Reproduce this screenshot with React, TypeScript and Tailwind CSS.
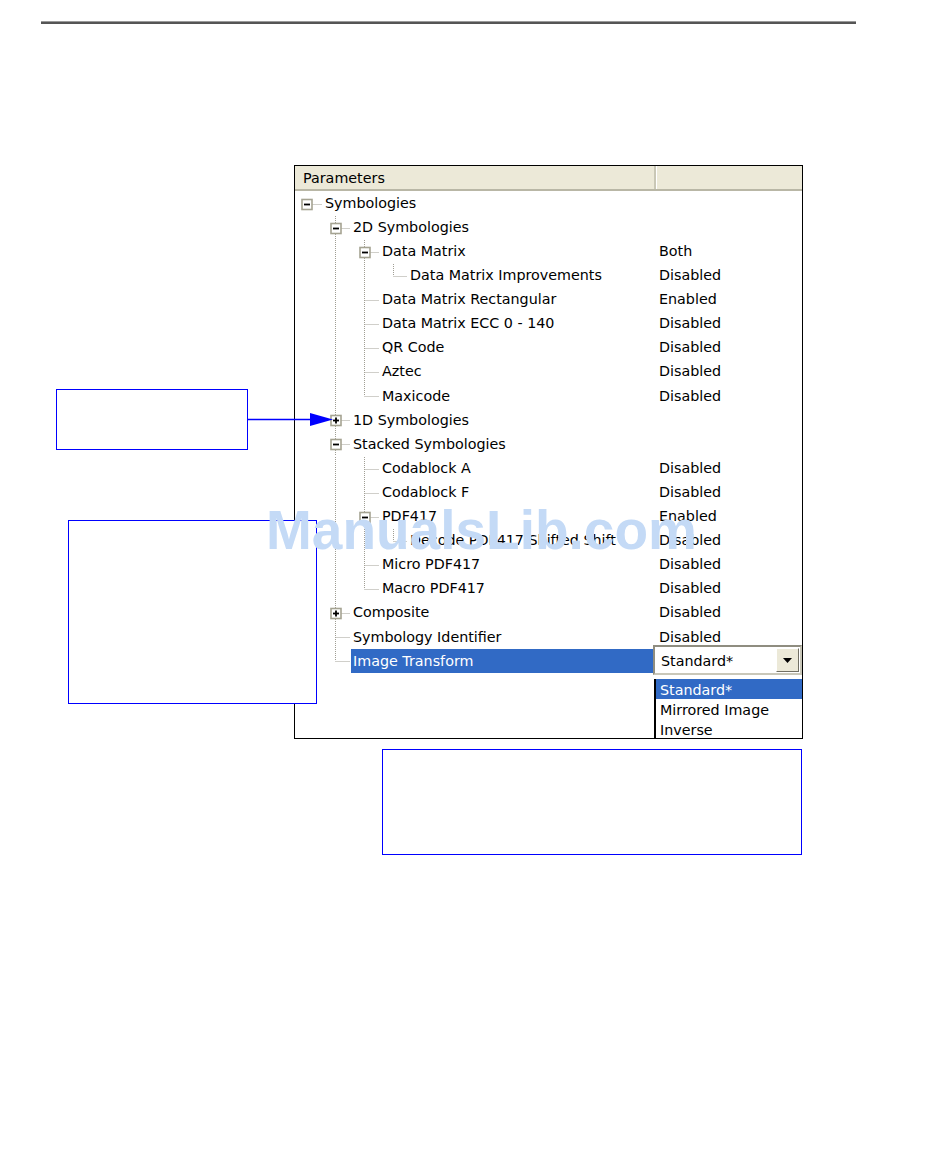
import React from 'react';

interface TreeNode {
  label: string;
  value?: string;
  children?: TreeNode[];
  collapsed?: boolean;
  selected?: boolean;
}

interface Row {
  node: TreeNode;
  depth: number;
  guides: boolean[];
  hasNext: boolean;
}

const tree: TreeNode = {
  label: 'Symbologies',
  children: [
    {
      label: '2D Symbologies',
      children: [
        {
          label: 'Data Matrix',
          value: 'Both',
          children: [{ label: 'Data Matrix Improvements', value: 'Disabled' }],
        },
        { label: 'Data Matrix Rectangular', value: 'Enabled' },
        { label: 'Data Matrix ECC 0 - 140', value: 'Disabled' },
        { label: 'QR Code', value: 'Disabled' },
        { label: 'Aztec', value: 'Disabled' },
        { label: 'Maxicode', value: 'Disabled' },
      ],
    },
    { label: '1D Symbologies', children: [], collapsed: true },
    {
      label: 'Stacked Symbologies',
      children: [
        { label: 'Codablock A', value: 'Disabled' },
        { label: 'Codablock F', value: 'Disabled' },
        {
          label: 'PDF417',
          value: 'Enabled',
          children: [{ label: 'Decode PDF417 Shifted Shift', value: 'Disabled' }],
        },
        { label: 'Micro PDF417', value: 'Disabled' },
        { label: 'Macro PDF417', value: 'Disabled' },
      ],
    },
    { label: 'Composite', value: 'Disabled', children: [], collapsed: true },
    { label: 'Symbology Identifier', value: 'Disabled' },
    { label: 'Image Transform', selected: true },
  ],
};

const flatten = (node: TreeNode, depth: number, guides: boolean[], hasNext: boolean, out: Row[]) => {
  out.push({ node, depth, guides, hasNext });
  if (node.children && !node.collapsed) {
    node.children.forEach((child, i) =>
      flatten(child, depth + 1, [...guides, hasNext], i < node.children!.length - 1, out)
    );
  }
  return out;
};

const rows = flatten(tree, 0, [], false, []);

const jointX = (d: number) => 11.5 + 29 * d;
const textX = (d: number) => 30 + Math.floor(28.5 * d);

const ROW_H = 24;
const LINE = '#a09e94';

function Gutter({ row }: { row: Row }) {
  const { depth, guides, hasNext, node } = row;
  const width = textX(depth) - 2;
  const jx = jointX(depth);
  const mid = ROW_H / 2;
  const hasBox = node.children !== undefined;

  return (
    <svg width={width} height={ROW_H} className="shrink-0 block">
      {guides.map((g, k) =>
        k >= 1 && g ? (
          <line key={k} x1={jointX(k)} y1={0} x2={jointX(k)} y2={ROW_H} stroke={LINE} strokeDasharray="1 1" />
        ) : null
      )}
      {depth > 0 && (
        <line x1={jx} y1={0} x2={jx} y2={hasNext ? ROW_H : mid} stroke={LINE} strokeDasharray="1 1" />
      )}
      <line x1={jx} y1={mid + 0.5} x2={width - 1} y2={mid + 0.5} stroke={LINE} strokeDasharray="1 1" />
      {hasBox && (
        <g>
          <rect x={jx - 4.5} y={mid - 4.5} width={10} height={10} fill="white" stroke="#a5a392" strokeWidth="1.6" />
          <line x1={jx - 2.5} y1={mid + 0.5} x2={jx + 3.5} y2={mid + 0.5} stroke="black" strokeWidth="1.8" />
          {node.collapsed && (
            <line x1={jx + 0.5} y1={mid - 2.5} x2={jx + 0.5} y2={mid + 3.5} stroke="black" strokeWidth="1.8" />
          )}
        </g>
      )}
    </svg>
  );
}

function ComboBox() {
  return (
    <>
      <div className="absolute left-0 top-[-4px] w-[149px] h-[30px] border-2 border-t-[#8f8d80] border-l-[#8f8d80] border-r-[#c9c7b9] border-b-[#c9c7b9] bg-white flex items-center">
        <span className="pl-[6px] pt-[3px] flex-1 text-black">Standard*</span>
        <div className="w-[23px] h-[24px] mr-[1px] bg-[#ece9d8] border border-t-white border-l-white border-r-[#716f64] border-b-[#716f64] flex items-center justify-center">
          <svg width="9" height="5" viewBox="0 0 9 5">
            <polygon points="0,0 9,0 4.5,5" fill="black" />
          </svg>
        </div>
      </div>
      <div className="absolute left-[1px] top-[30px] w-[148px] h-[70px] bg-white border-l-2 border-black flex flex-col">
        <div className="h-[20px] bg-[#316ac5] text-white pl-[4px] leading-[22px]">Standard*</div>
        <div className="h-[20px] pl-[4px] leading-[22px]">Mirrored Image</div>
        <div className="h-[20px] pl-[4px] leading-[22px]">Inverse</div>
      </div>
    </>
  );
}

export default function App() {
  return (
    <div
      className="relative w-[950px] h-[1167px] bg-white overflow-hidden"
      style={{ fontFamily: '"DejaVu Sans", Verdana, sans-serif' }}
    >
      <div className="ml-[41px] mt-[21px] w-[815px] h-[3px] bg-[#555555] border-t border-[#9a9a9a]" />

      <div className="ml-[294px] mt-[141px] w-[509px] h-[574px] border border-black bg-white overflow-hidden text-[14.3px] text-black">
        <div className="flex h-[25px] bg-[#ece9d8] border-b-2 border-[#b9b7a6]">
          <div className="w-[361px] pl-[8px] pt-[2px] flex items-center border-r-2 border-[#c9c7b6]">Parameters</div>
          <div className="flex-1 border-l border-white" />
        </div>

        <div className="flex flex-col">
          {rows.map((row, i) => (
            <div key={i} className="flex h-[24.1px] items-center pt-[1px]">
              <div className="w-[358px] flex items-center h-[24px]">
                <Gutter row={row} />
                <div
                  className={
                    row.node.selected
                      ? 'flex-1 h-[24px] flex items-center pl-[2px] bg-[#316ac5] text-white'
                      : 'pl-[2px] whitespace-nowrap'
                  }
                >
                  {row.node.label}
                </div>
              </div>
              <div className="relative flex-1 h-[24px] flex items-center pl-[6px]">
                {row.node.selected ? <ComboBox /> : row.node.value}
              </div>
            </div>
          ))}
        </div>
      </div>

      {/* callouts */}
      <div className="absolute left-[56px] top-[389px] w-[192px] h-[61px] border-[1.5px] border-[#0000ff] bg-white" />
      <svg className="absolute left-[247px] top-[410px]" width="90" height="20">
        <line x1="0" y1="9.5" x2="66" y2="9.5" stroke="#0000ff" strokeWidth="1.5" />
        <polygon points="63,3 86,9.5 63,16" fill="#0000ff" />
      </svg>
      <div className="absolute left-[68px] top-[520px] w-[249px] h-[184px] border-[1.5px] border-[#0000ff] bg-white" />
      <div className="absolute left-[382px] top-[749px] w-[420px] h-[106px] border-[1.5px] border-[#0000ff] bg-white" />

      {/* watermark */}
      <div
        className="absolute left-[266px] top-[503px] text-[55px] leading-[55px] font-bold text-[#c4daf6] whitespace-nowrap"
        style={{ fontFamily: '"Liberation Sans", Arial, sans-serif' }}
      >
        ManualsLib.com
      </div>
    </div>
  );
}
